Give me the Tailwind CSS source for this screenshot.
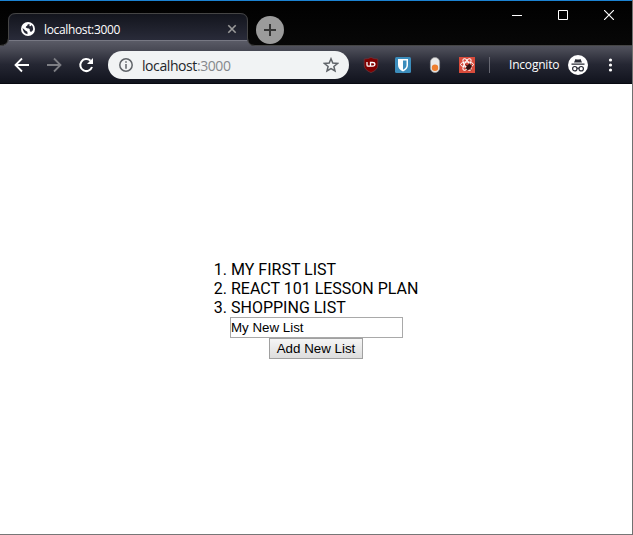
<!DOCTYPE html>
<html lang="en">
<head>
<meta charset="utf-8">
<title>localhost:3000</title>
<script src="https://cdn.jsdelivr.net/npm/@tailwindcss/browser@4"></script>
</head>
<body class="flex h-[535px] w-[633px] overflow-hidden bg-white font-['Open_Sans','Noto_Sans',sans-serif]">
<div class="flex h-full w-[632px] flex-col border-b border-[#777]">
  <header class="relative h-[84px] shrink-0 border-t border-[#1b82d2] bg-black text-white">
    <svg class="absolute left-0 top-0 h-[83px] w-[632px]" viewBox="0 1 632 83">
      <defs>
        <linearGradient id="bar" x1="0" y1="40" x2="0" y2="84" gradientUnits="userSpaceOnUse"><stop offset="0" stop-color="#5c5d68"/><stop offset=".22" stop-color="#494a55"/><stop offset=".55" stop-color="#252733"/><stop offset="1" stop-color="#10121c"/></linearGradient>
        <linearGradient id="tab" x1="0" y1="13" x2="0" y2="40" gradientUnits="userSpaceOnUse"><stop offset="0" stop-color="#12141c"/><stop offset="1" stop-color="#292b39"/></linearGradient>
        <linearGradient id="top" x1="0" y1="0" x2="0" y2="46" gradientUnits="userSpaceOnUse"><stop offset="0" stop-color="#000"/><stop offset="1" stop-color="#070707"/></linearGradient>
      </defs>
      <path fill="url(#top)" d="M0 1h632v45H0z"/>
      <path fill="url(#bar)" d="M0 46Q8 46 8 39H248Q248 46 255 46H632V84H0Z"/>
      <path fill="url(#tab)" d="M8 40V20Q8 13 15 13H240Q248 13 248 21V40Z"/>
      <path fill="none" stroke="#454545" d="M0 45.500Q8.500 45.500 8.500 38V21Q8.500 13.500 16 13.500H240Q247.500 13.500 247.500 21V38Q247.500 45.500 255 45.500H632"/>
      <path stroke="#777883" d="M9 40.500H247"/>
      <path stroke="#080911" d="M0 83.500H632"/>
    </svg>
    <div class="relative flex h-[45px]">
      <div class="ml-2 mt-3 flex h-[33px] w-60 items-center pb-px pl-[13px] pr-[11px]">
        <svg class="h-[14px] w-[14px] shrink-0" viewBox="0 0 14 14"><circle cx="7" cy="7" r="7" fill="#fff"/><path fill="#252735" d="M1.600 6L5 9Q6.500 9 6.500 10.500V12.300Q2 11.500 1.600 6ZM8.500 2Q6 2 6.200 3.700Q4.500 4 4.800 5.600Q6 6.500 8 6.500Q9.300 7 8.800 9L10 10Q12 9 12.200 7Q12 4 10.500 3Q9.500 5 8.500 4Z"/></svg>
        <span class="ml-[9px] w-[170px] whitespace-nowrap pt-[2px] text-[12px] tracking-[-0.35px]">localhost:3000</span>
        <svg class="ml-auto h-[10px] w-[10px]" viewBox="0 0 10 10" stroke="#9a9a9a" stroke-width="1.600"><path d="M1.300 1.300L8.700 8.700M8.700 1.300L1.300 8.700"/></svg>
      </div>
      <div class="ml-2 mt-[15px] flex h-7 w-7 items-center justify-center rounded-full bg-[#9b9b9b]">
        <svg class="h-3 w-3" viewBox="0 0 12 12" stroke="#343434" stroke-width="2"><path d="M6 0V12M0 6H12"/></svg>
      </div>
      <div class="ml-auto mr-[18px] mt-[9px] flex gap-9">
        <svg class="h-[10px] w-[10px]" viewBox="0 0 10 10" stroke="#fff"><path d="M0 5.500H10"/></svg>
        <svg class="h-[10px] w-[10px]" viewBox="0 0 10 10" fill="none" stroke="#fff"><path d="M.5.5H9.500V9.500H.5Z"/></svg>
        <svg class="h-[10px] w-[10px]" viewBox="0 0 10 10" stroke="#fff" stroke-width="1.150"><path d="M0 0L10 10M10 0L0 10"/></svg>
      </div>
    </div>
    <div class="relative flex h-[38px] items-center">
      <svg class="ml-[14px] h-4 w-4" viewBox="0 0 16 16" fill="none" stroke="#fff" stroke-width="1.800"><path d="M15 8H2M8 1.500L1.500 8L8 14.500"/></svg>
      <svg class="ml-4 h-4 w-4" viewBox="0 0 16 16" fill="none" stroke="#7d7e84" stroke-width="1.800"><path d="M1 8H14M8 1.500L14.500 8L8 14.500"/></svg>
      <svg class="ml-4 h-4 w-4" viewBox="0 0 16 16"><path fill="none" stroke="#fff" stroke-width="2" d="M14 10A6 6 0 1 1 12.500 3.800"/><path fill="#fff" d="M15 1V7H9Z"/></svg>
      <div class="ml-[14px] flex h-7 w-[241px] items-center rounded-full bg-[#f1f3f4] pl-[11px] pr-[10px] text-[#24262a]">
        <svg class="h-[14px] w-[14px]" viewBox="0 0 14 14"><circle cx="7" cy="7" r="6.200" fill="none" stroke="#5f6368" stroke-width="1.500"/><path stroke="#5f6368" stroke-width="1.500" d="M7 3.300V4.800M7 6V10.700"/></svg>
        <span class="ml-[9px] whitespace-nowrap text-[14px] tracking-[-0.42px]">localhost<span class="text-[#85888c]">:3000</span></span>
        <svg class="ml-auto h-4 w-4" viewBox="0 0 16 16" fill="none" stroke="#5f6368" stroke-width="1.500"><path d="M8 1.800L9.800 6.100L14.500 6.500L10.900 9.500L12 14L8 11.600L4 14L5.100 9.500L1.500 6.500L6.200 6.100Z"/></svg>
      </div>
      <svg class="ml-[14px] h-4 w-4" viewBox="0 0 16 16"><path fill="#800000" stroke="#6b3a40" stroke-width=".7" d="M8 .4Q11 2 14.800 2V8Q14.800 13 8 15.600Q1.200 13 1.200 8V2Q5 2 8 .4Z"/><path fill="none" stroke="#fff" stroke-width="1.300" d="M4 5V8Q4 9.200 5.200 9.200H7.500V5.500H9.500Q11.900 5.500 11.900 7.300T9.500 9.200H7.500"/></svg>
      <svg class="ml-4 h-4 w-4" viewBox="0 0 16 16"><rect width="16" height="16" rx="1.500" fill="#3c8dbc"/><path fill="#fff" d="M3 2H13V8Q13 12 8 14.500Q3 12 3 8Z"/><path fill="#3c8dbc" d="M8 3.500H11.500V8Q11.500 11 8 12.800Z"/></svg>
      <svg class="ml-4 h-4 w-4" viewBox="0 0 16 16"><rect x="3.400" y=".5" width="9.200" height="15" rx="4.600" fill="#e9e9e9" stroke="#9c9c9c" stroke-width=".7"/><circle cx="8" cy="10.700" r="3.200" fill="#ee7e2e"/></svg>
      <svg class="ml-4 h-4 w-4" viewBox="0 0 16 16"><path fill="#d94b3b" d="M0 0H16V16H0Z"/><g fill="none" stroke="#fff" stroke-width="1"><ellipse cx="8" cy="7.500" rx="6.500" ry="2.500"/><ellipse cx="8" cy="7.500" rx="6.500" ry="2.500" transform="rotate(60 8 7.500)"/><ellipse cx="8" cy="7.500" rx="6.500" ry="2.500" transform="rotate(-60 8 7.500)"/></g><ellipse cx="9.800" cy="10" rx="2.200" ry="3.200" fill="#2e1110" transform="rotate(35 9.800 10)"/><path stroke="#2e1110" stroke-width=".8" d="M6.500 7.500L12.500 13M6.500 11L13 9M8 13.500L11 6"/></svg>
      <div class="ml-[14px] h-4 w-px bg-[#666771]"></div>
      <span class="ml-[19px] w-[51px] whitespace-nowrap text-[12px] tracking-[-0.2px]">Incognito</span>
      <svg class="ml-2 h-5 w-5" viewBox="0 0 20 20"><circle cx="10" cy="10" r="10" fill="#fff"/><path fill="#292b35" d="M7.500 4Q10 5 12.500 4L14 7.500H6ZM3.500 8.500H16.500V9.700H3.500Z"/><g fill="none" stroke="#292b35" stroke-width="1.200"><circle cx="6.800" cy="13.700" r="2.200"/><circle cx="13.200" cy="13.700" r="2.200"/><path d="M9 13.500Q10 12.800 11 13.500"/></g></svg>
      <svg class="ml-auto mr-[14px] h-4 w-4" viewBox="0 0 16 16" fill="#fff"><circle cx="8.500" cy="3" r="1.600"/><circle cx="8.500" cy="8" r="1.600"/><circle cx="8.500" cy="13" r="1.600"/></svg>
    </div>
  </header>
  <main class="flex flex-1 flex-col items-center pt-[176px] font-['Roboto',sans-serif] text-black">
    <ol class="ml-[18px] w-[188px] list-decimal text-[16px] leading-[19px] whitespace-nowrap">
      <li>MY FIRST LIST</li>
      <li>REACT 101 LESSON PLAN</li>
      <li>SHOPPING LIST</li>
    </ol>
    <input class="ml-px h-[21px] w-[173px] border border-[#a9a9a9] bg-white px-0 text-[13.333px] font-['Liberation_Sans',sans-serif]" value="My New List">
    <button class="h-[21px] w-[94px] border border-[#a0a0a0] bg-linear-to-b from-[#f5f5f5] to-[#dddddd] text-[13.333px] leading-[19px] whitespace-nowrap font-['Liberation_Sans',sans-serif]">Add New List</button>
  </main>
</div>
<div class="h-full w-px bg-[#707070]"></div>
</body>
</html>
